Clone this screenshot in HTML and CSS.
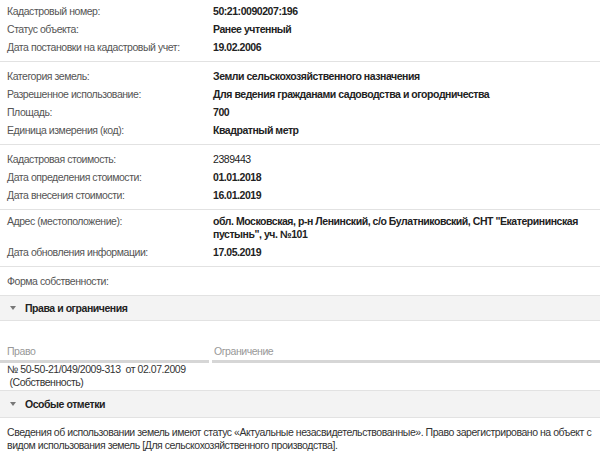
FILE: index.html
```html
<!DOCTYPE html>
<html lang="ru">
<head>
<meta charset="utf-8">
<link rel="stylesheet" href="styles.css">
</head>
<body>
<div class="page">
  <div class="group first">
    <div class="row"><div class="label">Кадастровый номер:</div><div class="value">50:21:0090207:196</div></div>
    <div class="row"><div class="label">Статус объекта:</div><div class="value">Ранее учтенный</div></div>
    <div class="row"><div class="label">Дата постановки на кадастровый учет:</div><div class="value">19.02.2006</div></div>
  </div>
  <div class="group">
    <div class="row"><div class="label">Категория земель:</div><div class="value">Земли сельскохозяйственного назначения</div></div>
    <div class="row"><div class="label">Разрешенное использование:</div><div class="value">Для ведения гражданами садоводства и огородничества</div></div>
    <div class="row"><div class="label">Площадь:</div><div class="value">700</div></div>
    <div class="row"><div class="label">Единица измерения (код):</div><div class="value">Квадратный метр</div></div>
  </div>
  <div class="group">
    <div class="row"><div class="label">Кадастровая стоимость:</div><div class="value plain">2389443</div></div>
    <div class="row"><div class="label">Дата определения стоимости:</div><div class="value">01.01.2018</div></div>
    <div class="row"><div class="label">Дата внесения стоимости:</div><div class="value">16.01.2019</div></div>
  </div>
  <div class="group tight">
    <div class="row"><div class="label">Адрес (местоположение):</div><div class="value">обл. Московская, р-н Ленинский, с/о Булатниковский, СНТ "Екатерининская пустынь", уч. №101</div></div>
    <div class="row"><div class="label">Дата обновления информации:</div><div class="value">17.05.2019</div></div>
  </div>
  <div class="group">
    <div class="row"><div class="label">Форма собственности:</div><div class="value"></div></div>
  </div>
  <div class="section-head"><span class="caret"></span>Права и ограничения</div>
  <div class="rights">
    <div class="rights-head">
      <div class="col-head">Право</div>
      <div class="col-head">Ограничение</div>
    </div>
    <div class="rights-row">
      <div class="right-cell">№ 50-50-21/049/2009-313&nbsp; от 02.07.2009<br>&nbsp;(Собственность)</div>
      <div class="right-cell"></div>
    </div>
  </div>
  <div class="section-head tall"><span class="caret"></span>Особые отметки</div>
  <div class="notes">Сведения об использовании земель имеют статус «Актуальные незасвидетельствованные». Право зарегистрировано на объект с видом использования земель [Для сельскохозяйственного производства].</div>
</div>
</body>
</html>
```
FILE: styles.css
```css
html, body {
  margin: 0;
  padding: 0;
  background: #fff;
}
body {
  font-family: "Liberation Sans", Arial, sans-serif;
  font-size: 10.5px;
  letter-spacing: -0.45px;
  color: #333;
}
.page {
  width: 600px;
}
.group {
  padding: 5px 0;
  border-bottom: 1px solid #e2e2e2;
}
.group.first {
  padding-top: 2px;
}
.group.tight {
  padding-top: 2px;
}
.row {
  display: grid;
  grid-template-columns: 206px 1fr;
  padding: 2.5px 0 2.5px 7px;
  line-height: 13px;
}
.label {
  color: #555;
}
.value {
  color: #222;
  font-weight: bold;
  padding-right: 20px;
}
.value.plain {
  font-weight: normal;
}
.section-head {
  display: flex;
  align-items: center;
  height: 24px;
  background: #f3f3f3;
  border-bottom: 1px solid #e2e2e2;
  font-weight: bold;
  color: #222;
  padding-left: 10px;
}
.section-head.tall {
  height: 26px;
}
.caret {
  width: 0;
  height: 0;
  border-left: 3px solid transparent;
  border-right: 3px solid transparent;
  border-top: 4px solid #777;
  margin-right: 9px;
}
.rights {
  padding-top: 20px;
}
.rights-head {
  display: grid;
  grid-template-columns: 209px 1fr;
  column-gap: 3px;
}
.col-head {
  color: #999;
  padding: 4px 7px 2px;
  border-bottom: 3px solid #d6d6d6;
  line-height: 13px;
}
.col-head + .col-head {
  padding-left: 2px;
}
.rights-row {
  display: grid;
  grid-template-columns: 209px 1fr;
  column-gap: 3px;
  border-bottom: 1px solid #e2e2e2;
}
.right-cell {
  padding: 0 7px 1px;
  line-height: 13px;
  white-space: nowrap;
}
.notes {
  padding: 8px 7px;
  line-height: 13px;
  color: #333;
}
```
